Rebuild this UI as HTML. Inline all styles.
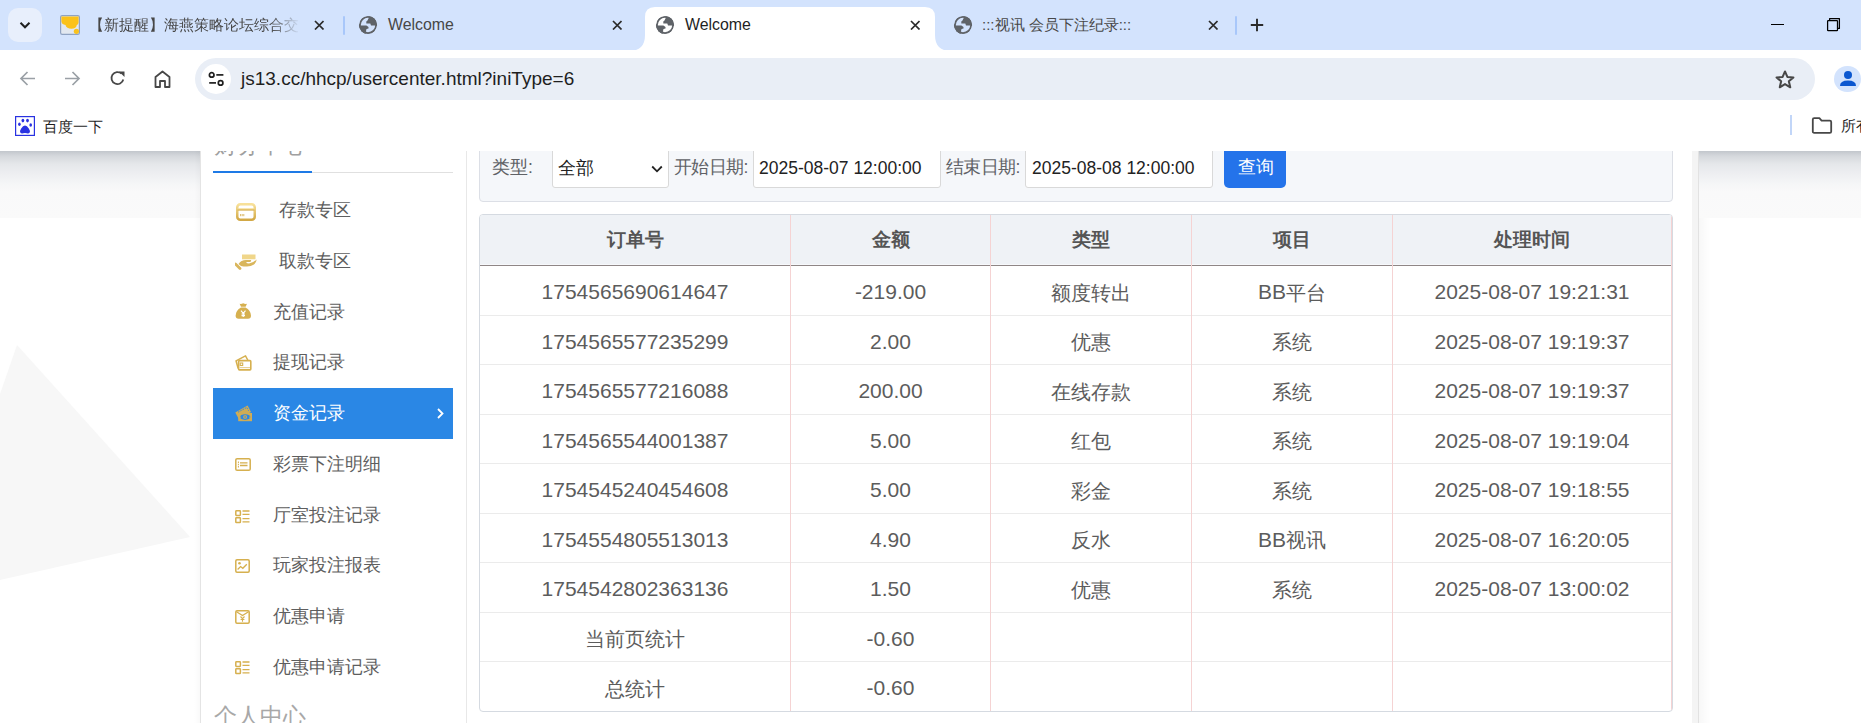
<!DOCTYPE html>
<html><head><meta charset="utf-8">
<style>
*{box-sizing:border-box;margin:0;padding:0}
html,body{width:1861px;height:723px;overflow:hidden;background:#fff;font-family:"Liberation Sans",sans-serif;position:relative}
.a{position:absolute}
.tabstrip{left:0;top:0;width:1861px;height:50px;background:#d3e3fd}
.ttl{font-size:15px;color:#474747;white-space:nowrap;line-height:18px}
.sep{width:2px;height:19px;background:#a8c7fa;border-radius:1px}
.toolbar{left:0;top:50px;width:1861px;height:101px;background:#fff;border-radius:9px 0 0 0}
.omni{left:195px;top:58px;width:1620px;height:42px;border-radius:21px;background:#e9eef6}
.page{left:0;top:151px;width:1861px;height:572px;background:#fff;overflow:hidden}
.side-item{position:absolute;left:213px;width:240px;height:50.75px}
.side-item .t{position:absolute;top:0px;line-height:50px;font-size:17.5px;color:#5e5e5e;white-space:nowrap}
.lbl{font-size:17.5px;color:#606266;line-height:20px;white-space:nowrap}
.inp{background:#fff;border:1px solid #d9d9d9;border-radius:3px}
.inp span{position:absolute;font-size:17.5px;color:#222;line-height:20px;white-space:nowrap}
.th{top:0;height:50px;line-height:50px;text-align:center;font-size:18.5px;font-weight:bold;color:#555}
.cj{font-size:20px;position:relative;top:0.5px}
.td{height:49.5px;line-height:51px;text-align:center;font-size:21px;color:#5c5c5c;white-space:nowrap}
</style></head><body>
<!-- tab strip -->
<div class="a tabstrip"></div>
<div class="a" style="left:8px;top:8px;width:34px;height:34px;border-radius:10px;background:#e8effc"></div>
<svg class="a" style="left:19px;top:19px" width="12" height="12" viewBox="0 0 12 12"><path d="M1.5 3.8 L6 8.3 L10.5 3.8" fill="none" stroke="#1f1f1f" stroke-width="2"/></svg>
<!-- tab1 -->
<svg class="a" style="left:60px;top:15px" width="20" height="20" viewBox="0 0 20 20"><rect x="0.6" y="0.6" width="18.8" height="18.8" rx="1.6" fill="#e2e8f0" stroke="#8fa3c3" stroke-width="1.2"/><path d="M1.4 1.4 H18.6 V7.5 Q18.4 9.5 16.8 10 Q16.5 13.5 11.5 13.8 Q6.5 13.8 5.5 10 Q1.8 9.5 1.4 6.5 Z" fill="#fbc21a"/><circle cx="16.4" cy="16.3" r="2.6" fill="#f9c21d"/></svg>
<div class="a ttl" style="left:89px;top:16px;width:211px;overflow:hidden;-webkit-mask-image:linear-gradient(90deg,#000 86%,transparent)">【新提醒】海燕策略论坛综合交流</div>
<svg class="a" style="left:313.7px;top:19.8px" width="10.5" height="10.5" viewBox="0 0 10.5 10.5"><path d="M1 1 L9.5 9.5 M9.5 1 L1 9.5" stroke="#2b2b2b" stroke-width="1.7"/></svg>
<div class="a sep" style="left:343px;top:16px"></div>
<!-- tab2 -->
<svg class="a" style="left:358px;top:15px" width="20" height="20" viewBox="-10 -10 20 20"><defs><clipPath id="gc368"><circle r="9.1"/></clipPath></defs><g clip-path="url(#gc368)"><circle r="8.15" fill="none" stroke="#5f6368" stroke-width="1.9"/><path d="M0.7,-10 L0.7,-7 L-0.5,-4.6 L-1.7,-3.6 L-1.7,-1.5 L2.3,-1.4 L3,0.4 L10,0.4 L10,-10 Z M-10,0.4 L-1.6,0.4 L0.5,2 L0.5,3.6 L-1.5,3.9 L-2.1,6.5 L-1.7,10 L-10,10 Z" fill="#5f6368"/></g></svg>
<div class="a ttl" style="left:388px;top:16px;font-size:15.9px">Welcome</div>
<svg class="a" style="left:611.7px;top:19.8px" width="10.5" height="10.5" viewBox="0 0 10.5 10.5"><path d="M1 1 L9.5 9.5 M9.5 1 L1 9.5" stroke="#2b2b2b" stroke-width="1.7"/></svg>
<!-- active tab -->
<svg class="a" style="left:629px;top:7px" width="322" height="44" viewBox="0 0 322 44"><path d="M0 44 Q16 44 16 28 V10 Q16 0 26 0 H296 Q306 0 306 10 V28 Q306 44 322 44 Z" fill="#fff"/></svg>
<svg class="a" style="left:655px;top:15px" width="20" height="20" viewBox="-10 -10 20 20"><defs><clipPath id="gc665"><circle r="9.1"/></clipPath></defs><g clip-path="url(#gc665)"><circle r="8.15" fill="none" stroke="#5f6368" stroke-width="1.9"/><path d="M0.7,-10 L0.7,-7 L-0.5,-4.6 L-1.7,-3.6 L-1.7,-1.5 L2.3,-1.4 L3,0.4 L10,0.4 L10,-10 Z M-10,0.4 L-1.6,0.4 L0.5,2 L0.5,3.6 L-1.5,3.9 L-2.1,6.5 L-1.7,10 L-10,10 Z" fill="#5f6368"/></g></svg>
<div class="a ttl" style="left:685px;top:16px;color:#1f1f1f;font-size:15.9px">Welcome</div>
<svg class="a" style="left:909.7px;top:19.8px" width="10.5" height="10.5" viewBox="0 0 10.5 10.5"><path d="M1 1 L9.5 9.5 M9.5 1 L1 9.5" stroke="#2b2b2b" stroke-width="1.7"/></svg>
<!-- tab4 -->
<svg class="a" style="left:953px;top:15px" width="20" height="20" viewBox="-10 -10 20 20"><defs><clipPath id="gc963"><circle r="9.1"/></clipPath></defs><g clip-path="url(#gc963)"><circle r="8.15" fill="none" stroke="#5f6368" stroke-width="1.9"/><path d="M0.7,-10 L0.7,-7 L-0.5,-4.6 L-1.7,-3.6 L-1.7,-1.5 L2.3,-1.4 L3,0.4 L10,0.4 L10,-10 Z M-10,0.4 L-1.6,0.4 L0.5,2 L0.5,3.6 L-1.5,3.9 L-2.1,6.5 L-1.7,10 L-10,10 Z" fill="#5f6368"/></g></svg>
<div class="a ttl" style="left:982px;top:16px">:::视讯 会员下注纪录:::</div>
<svg class="a" style="left:1207.7px;top:19.8px" width="10.5" height="10.5" viewBox="0 0 10.5 10.5"><path d="M1 1 L9.5 9.5 M9.5 1 L1 9.5" stroke="#2b2b2b" stroke-width="1.7"/></svg>
<div class="a sep" style="left:1235px;top:16px"></div>
<svg class="a" style="left:1250px;top:18px" width="14" height="14" viewBox="0 0 14 14"><path d="M7 0.8 V13.2 M0.8 7 H13.2" stroke="#2b2b2b" stroke-width="1.9"/></svg>
<!-- window controls -->
<div class="a" style="left:1771px;top:23.8px;width:13px;height:1.3px;background:#000"></div>
<svg class="a" style="left:1826px;top:17px" width="15" height="15" viewBox="0 0 15 15"><rect x="1.6" y="3.6" width="9.9" height="9.9" rx="0.6" fill="none" stroke="#000" stroke-width="1.25"/><path d="M3.6 3.4 V1.6 H13.4 V11.4 H11.6" fill="none" stroke="#000" stroke-width="1.25" stroke-linejoin="round"/></svg>
<!-- toolbar -->
<div class="a toolbar"></div>
<svg class="a" style="left:19px;top:70px" width="17" height="17" viewBox="0 0 17 17"><path d="M16 8.5 H2.5 M8.5 2 L2 8.5 L8.5 15" fill="none" stroke="#9aa0a6" stroke-width="1.7"/></svg>
<svg class="a" style="left:64px;top:70px" width="17" height="17" viewBox="0 0 17 17"><path d="M1 8.5 H14.5 M8.5 2 L15 8.5 L8.5 15" fill="none" stroke="#9aa0a6" stroke-width="1.7"/></svg>
<svg class="a" style="left:109px;top:70px" width="17" height="17" viewBox="0 0 17 17"><path d="M14.3 9.5 A6 6 0 1 1 12.6 3.7" fill="none" stroke="#474747" stroke-width="1.8"/><path d="M10 1.5 L15.5 1.5 L15.5 7 Z" fill="#474747"/></svg>
<svg class="a" style="left:154px;top:70px" width="17" height="18" viewBox="0 0 17 18"><path d="M1.5 17 V7 L8.5 1.5 L15.5 7 V17 H11 V11 H6 V17 Z" fill="none" stroke="#474747" stroke-width="1.8" stroke-linejoin="round"/></svg>
<div class="a omni"></div>
<div class="a" style="left:201px;top:64px;width:30px;height:30px;border-radius:15px;background:#fff"></div>
<svg class="a" style="left:207px;top:70px" width="18" height="18" viewBox="0 0 18 18"><circle cx="4.7" cy="4.9" r="2.3" fill="none" stroke="#1f1f1f" stroke-width="1.7"/><path d="M9.3 4.9 H16.4" stroke="#1f1f1f" stroke-width="1.7"/><circle cx="13.6" cy="12.9" r="2.3" fill="none" stroke="#1f1f1f" stroke-width="1.7"/><path d="M2.2 12.9 H9" stroke="#1f1f1f" stroke-width="1.7"/></svg>
<div class="a" style="left:241px;top:68px;font-size:19px;color:#1f1f1f;line-height:22px;white-space:nowrap">js13.cc/hhcp/usercenter.html?iniType=6</div>
<svg class="a" style="left:1774px;top:69px" width="22" height="21" viewBox="0 0 24 24"><path d="M12 2.8 L14.7 9.1 L21.6 9.6 L16.4 14.1 L18 20.9 L12 17.3 L6 20.9 L7.6 14.1 L2.4 9.6 L9.3 9.1 Z" fill="none" stroke="#474747" stroke-width="2.3" stroke-linejoin="round"/></svg>
<div class="a" style="left:1834px;top:66px;width:27px;height:26px;border-radius:13px;background:#d3e3fd"></div>
<svg class="a" style="left:1838px;top:69px" width="20" height="20" viewBox="0 0 20 20"><circle cx="10" cy="6" r="4" fill="#0b57d0"/><path d="M2 17 Q2 11.5 10 11.5 Q18 11.5 18 17 Z" fill="#0b57d0"/></svg>
<!-- bookmarks -->
<svg class="a" style="left:15px;top:116px" width="20" height="20" viewBox="0 0 20 20"><rect x="0.6" y="0.6" width="18.8" height="18.8" fill="#fff" stroke="#2932e1" stroke-width="1.2"/><ellipse cx="7.9" cy="4.6" rx="1.4" ry="1.8" fill="#2932e1"/><ellipse cx="12.5" cy="4.6" rx="1.4" ry="1.8" fill="#2932e1"/><ellipse cx="4.4" cy="8.3" rx="1.3" ry="1.7" fill="#2932e1"/><ellipse cx="15.7" cy="9" rx="1.3" ry="1.7" fill="#2932e1"/><path d="M10 9.6 Q8 9.6 6.2 12.4 Q4.4 15 5.3 16.6 Q6.2 17.8 8.2 17.3 Q10 16.9 11.8 17.3 Q13.8 17.8 14.7 16.6 Q15.6 15 13.8 12.4 Q12 9.6 10 9.6 Z" fill="#2932e1"/></svg>
<div class="a" style="left:43px;top:117.5px;font-size:15px;color:#1f1f1f;line-height:18px">百度一下</div>
<div class="a" style="left:1790px;top:115px;width:2px;height:20px;background:#c2d6f8"></div>
<svg class="a" style="left:1811px;top:117px" width="22" height="17" viewBox="0 0 22 17"><path d="M1.8 2.6 Q1.8 1.2 3.2 1.2 H8.4 L10.6 3.6 H18.8 Q20.2 3.6 20.2 5 V14.4 Q20.2 15.8 18.8 15.8 H3.2 Q1.8 15.8 1.8 14.4 Z" fill="none" stroke="#474747" stroke-width="1.8" stroke-linejoin="round"/></svg>
<div class="a" style="left:1841px;top:117px;font-size:15px;color:#1f1f1f;line-height:18px;white-space:nowrap">所有书签</div>
<!-- page -->
<div class="a page">
  <!-- background decorations (coords relative to page top=151) -->
  <div class="a" style="left:0;top:0;width:1861px;height:67px;background:linear-gradient(180deg,#c2c6cc 0px,#d5d8dc 5px,#e5e7ea 13px,#edeef1 22px,#f5f6f7 33px,#f9f9fa 41px,#fafafa 67px)"></div>
  <svg class="a" style="left:0;top:0" width="200" height="572"><polygon points="0,243 17,194 190,386 0,429" fill="#f7f7f7"/></svg>
  <!-- container -->
  <div class="a" style="left:194px;top:0;width:6px;height:572px;background:linear-gradient(90deg,rgba(0,0,0,0),rgba(0,0,0,0.025))"></div>
  <div class="a" style="left:200px;top:0;width:1498px;height:572px;background:#fff;border-left:1px solid #e4e4e4"></div>
  <div class="a" style="left:1692px;top:0;width:7px;height:572px;background:#f4f4f4;border-right:1px solid #e2e2e2"></div>
  <div class="a" style="left:1699px;top:67px;width:12px;height:505px;background:linear-gradient(90deg,rgba(0,0,0,0.03),rgba(0,0,0,0))"></div>
  <div class="a" style="left:466px;top:0;width:1px;height:572px;background:#e8e8e8"></div>
  <!-- sidebar -->
  <div class="a" style="left:214px;top:-18px;font-size:22.5px;color:#a0a0a0;line-height:26px;white-space:nowrap">财务中心</div>
  <div class="a" style="left:213px;top:21px;width:240px;height:1px;background:#e0e0e0"></div>
  <div class="a" style="left:213px;top:20px;width:99px;height:2px;background:#1e7ae6"></div>
  <!-- sidebar items -->
  <svg width="0" height="0" style="position:absolute"><defs><linearGradient id="gd" x1="0" y1="0" x2="0" y2="1"><stop offset="0" stop-color="#f8e19a"/><stop offset="1" stop-color="#d2a845"/></linearGradient></defs></svg>
  <div class="side-item" style="top:34px"><svg class="a" style="left:23px;top:18px" width="20" height="18" viewBox="0 0 20 18"><rect x="1.25" y="1.25" width="17.5" height="15.5" rx="3" fill="none" stroke="url(#gd)" stroke-width="2.5"/><rect x="1.5" y="5.3" width="17" height="2.3" fill="url(#gd)"/><path d="M4.6 11 V13.2 M6.2 11 V13.2 M7.8 11 V13.2" stroke="#d8b25a" stroke-width="0.9"/></svg><span class="t" style="left:66px">存款专区</span></div>
  <div class="side-item" style="top:84.75px"><svg class="a" style="left:22px;top:17.5px" width="23" height="17" viewBox="0 0 23 17"><rect x="7" y="1.5" width="13.5" height="4.8" fill="#f0d68a"/><path d="M3.5 11 Q6 7 11 7 H16 Q16.5 8.5 15 9 H11 Q12 10.5 14 10.5 Q18 10 21.5 6.5 Q22 8.5 19 11.5 Q16 13.5 12 13.5 Q8 13.5 6 13 Z" fill="#d9b65c"/><path d="M0.5 11 L5 15.5" stroke="#d9b65c" stroke-width="2.8" stroke-linecap="round"/></svg><span class="t" style="left:66px">取款专区</span></div>
  <div class="side-item" style="top:135.5px"><svg class="a" style="left:22px;top:16px" width="17" height="17" viewBox="0 0 17 17"><path d="M4.6 0.8 Q6.5 1.2 8.2 0.2 Q10 1.2 12 0.8 L10.6 3.8 H6 Z" fill="#d6b04f"/><path d="M6 4.6 H10.5 Q15.8 7.5 16 12.8 Q16 15.8 13 15.8 H3.6 Q0.6 15.8 0.6 12.8 Q0.8 7.5 6 4.6 Z" fill="#d6b04f"/><path d="M6 7.6 L8.25 10.3 L10.5 7.6 M8.25 10.3 V14 M6.5 11 H10 M6.5 12.6 H10" fill="none" stroke="#fff" stroke-width="1.1"/></svg><span class="t" style="left:60px">充值记录</span></div>
  <div class="side-item" style="top:186.25px"><svg class="a" style="left:22px;top:17.5px" width="17" height="16" viewBox="0 0 17 16"><path d="M3.2 13.5 L1 5.8 L10.5 0.8 L13 5.5" fill="none" stroke="#d6b04f" stroke-width="1.5" stroke-linejoin="round"/><rect x="3.6" y="5.6" width="12.2" height="9.3" rx="0.8" fill="none" stroke="#d6b04f" stroke-width="1.6"/><rect x="5.2" y="8" width="2.5" height="2.5" fill="none" stroke="#d6b04f" stroke-width="1.1"/><path d="M4.5 12.6 H15" stroke="#e7cf93" stroke-width="1.1"/></svg><span class="t" style="left:60px">提现记录</span></div>
  <div class="side-item" style="top:237px;background:#2a87e5"><svg class="a" style="left:22px;top:17px" width="18" height="17" viewBox="0 0 18 17"><path d="M0.3 7.4 L12.6 0.6 L16 7 L3.7 13.8 Z" fill="#cfac55"/><path d="M3 7.2 L11.8 2.4 L13.6 5.8" fill="none" stroke="#2a87e5" stroke-width="0.9" stroke-dasharray="1.6 1"/><rect x="3.2" y="8" width="13.8" height="8.2" fill="#cfac55"/><ellipse cx="10.1" cy="12.1" rx="5.2" ry="2.8" fill="#2a87e5"/><circle cx="10.1" cy="12.1" r="2" fill="#cfac55"/><path d="M10.1 10.8 V13.4" stroke="#2a87e5" stroke-width="0.8"/><circle cx="5.6" cy="12.1" r="0.6" fill="#cfac55"/><circle cx="14.6" cy="12.1" r="0.6" fill="#cfac55"/></svg><span class="t" style="left:60px;color:#fff">资金记录</span><svg class="a" style="left:223px;top:20px" width="9" height="11" viewBox="0 0 9 11"><path d="M2 1 L6.5 5.5 L2 10" fill="none" stroke="#fff" stroke-width="1.8"/></svg></div>
  <div class="side-item" style="top:287.75px"><svg class="a" style="left:22px;top:19.5px" width="16" height="13" viewBox="0 0 16 13"><rect x="0.8" y="0.8" width="14.4" height="11.4" rx="1.3" fill="none" stroke="#d6b04f" stroke-width="1.5"/><path d="M2.9 4.2 H3.9 M2.9 6.5 H3.9 M2.9 8.8 H3.9" stroke="#d6b04f" stroke-width="1.5"/><path d="M5 4.8 H12.5 M5 7.5 H12.5" stroke="#d6b04f" stroke-width="1.3"/></svg><span class="t" style="left:60px">彩票下注明细</span></div>
  <div class="side-item" style="top:338.5px"><svg class="a" style="left:22px;top:20px" width="16" height="14" viewBox="0 0 16 14"><rect x="0.8" y="0.8" width="4.6" height="4.6" rx="0.6" fill="none" stroke="#d6b04f" stroke-width="1.5"/><rect x="0.8" y="7.7" width="4.6" height="4.8" rx="0.6" fill="none" stroke="#d6b04f" stroke-width="1.5"/><path d="M7.5 1 H14.5 M7.5 4.3 H14.5 M7.5 8.6 H14.5 M7.5 11.9 H14.5" stroke="#d6b04f" stroke-width="1.3"/></svg><span class="t" style="left:60px">厅室投注记录</span></div>
  <div class="side-item" style="top:389.25px"><svg class="a" style="left:22px;top:19px" width="15" height="14" viewBox="0 0 15 14"><rect x="0.8" y="0.8" width="13.4" height="12.4" rx="1.2" fill="none" stroke="#d6b04f" stroke-width="1.5"/><circle cx="4.5" cy="4.2" r="1.3" fill="#d6b04f"/><path d="M2.6 10.5 L5.6 7.6 L7.8 9.3 L11.8 5.2" fill="none" stroke="#d6b04f" stroke-width="1.3"/></svg><span class="t" style="left:60px">玩家投注报表</span></div>
  <div class="side-item" style="top:440px"><svg class="a" style="left:22px;top:19px" width="15" height="14" viewBox="0 0 15 14"><rect x="0.8" y="0.8" width="13.4" height="12.4" rx="1.2" fill="none" stroke="#d6b04f" stroke-width="1.5"/><path d="M1.5 1.8 L7.5 5.5 L13.5 1.8" fill="none" stroke="#d6b04f" stroke-width="1.3"/><path d="M5.5 6.5 L7.5 8.6 L9.5 6.5 M7.5 8.6 V11.8 M5.6 9.5 H9.4" fill="none" stroke="#d6b04f" stroke-width="1.1"/></svg><span class="t" style="left:60px">优惠申请</span></div>
  <div class="side-item" style="top:490.75px"><svg class="a" style="left:22px;top:19.5px" width="16" height="14" viewBox="0 0 16 14"><rect x="0.8" y="0.8" width="4.6" height="4.6" rx="0.6" fill="none" stroke="#d6b04f" stroke-width="1.5"/><rect x="0.8" y="7.7" width="4.6" height="4.8" rx="0.6" fill="none" stroke="#d6b04f" stroke-width="1.5"/><path d="M7.5 1 H14.5 M7.5 4.3 H14.5 M7.5 8.6 H14.5 M7.5 11.9 H14.5" stroke="#d6b04f" stroke-width="1.3"/></svg><span class="t" style="left:60px">优惠申请记录</span></div>
  <div class="a" style="left:214px;top:553px;font-size:22.5px;color:#a8a8a8;line-height:26px;white-space:nowrap">个人中心</div>
<!-- /side -->
  <!-- content -->
  <div class="a" style="left:479px;top:-10px;width:1194px;height:61px;background:#f5f7fa;border:1px solid #dcdfe6;border-radius:4px"></div>
  <div class="a lbl" style="left:492px;top:6px">类型:</div>
  <div class="a inp" style="left:552px;top:-4px;width:117px;height:41px"><span style="left:5px;top:10px">全部</span><svg class="a" style="left:98px;top:16px" width="12" height="10" viewBox="0 0 12 10"><path d="M1.2 2.5 L6 7.3 L10.8 2.5" fill="none" stroke="#222" stroke-width="1.8"/></svg></div>
  <div class="a lbl" style="left:674px;top:6px;letter-spacing:-0.6px">开始日期:</div>
  <div class="a inp" style="left:753px;top:-4px;width:188px;height:41px"><span style="left:5px;top:10px">2025-08-07 12:00:00</span></div>
  <div class="a lbl" style="left:946px;top:6px;letter-spacing:-0.6px">结束日期:</div>
  <div class="a inp" style="left:1025px;top:-4px;width:188px;height:41px"><span style="left:6px;top:10px">2025-08-08 12:00:00</span></div>
  <div class="a" style="left:1224px;top:-4px;width:62px;height:41px;background:#2473ea;border-radius:5px;color:#fff;font-size:17.5px;line-height:20px"><span class="a" style="left:14px;top:10px">查询</span></div>
  <div class="a" style="left:479px;top:63px;width:1194px;height:498px;border:1px solid #d5dae1;border-radius:4px;overflow:hidden;background:#fff">
    <div class="a" style="left:0;top:0;width:1194px;height:49px;background:#eff2f6"></div>
    <div class="a" style="left:0;top:49px;width:1194px;height:1px;background:#f7f9fc"></div>
    <div class="a" style="left:0;top:50px;width:1194px;height:1px;background:#8f8686"></div>
    <div class="a th" style="left:0px;width:310px">订单号</div>
    <div class="a th" style="left:311px;width:199px">金额</div>
    <div class="a th" style="left:511px;width:200px">类型</div>
    <div class="a th" style="left:712px;width:200px">项目</div>
    <div class="a th" style="left:913px;width:278px">处理时间</div>
    <div class="a" style="left:0;top:100px;width:1194px;height:1px;background:#ebebeb"></div>
    <div class="a td" style="left:0px;top:51.0px;width:310px">1754565690614647</div>
    <div class="a td" style="left:311px;top:51.0px;width:199px">-219.00</div>
    <div class="a td" style="left:511px;top:51.0px;width:200px"><span class="cj">额度转出</span></div>
    <div class="a td" style="left:712px;top:51.0px;width:200px">BB<span class="cj">平台</span></div>
    <div class="a td" style="left:913px;top:51.0px;width:278px">2025-08-07 19:21:31</div>
    <div class="a" style="left:0;top:149px;width:1194px;height:1px;background:#ebebeb"></div>
    <div class="a td" style="left:0px;top:100.5px;width:310px">1754565577235299</div>
    <div class="a td" style="left:311px;top:100.5px;width:199px">2.00</div>
    <div class="a td" style="left:511px;top:100.5px;width:200px"><span class="cj">优惠</span></div>
    <div class="a td" style="left:712px;top:100.5px;width:200px"><span class="cj">系统</span></div>
    <div class="a td" style="left:913px;top:100.5px;width:278px">2025-08-07 19:19:37</div>
    <div class="a" style="left:0;top:199px;width:1194px;height:1px;background:#ebebeb"></div>
    <div class="a td" style="left:0px;top:150.0px;width:310px">1754565577216088</div>
    <div class="a td" style="left:311px;top:150.0px;width:199px">200.00</div>
    <div class="a td" style="left:511px;top:150.0px;width:200px"><span class="cj">在线存款</span></div>
    <div class="a td" style="left:712px;top:150.0px;width:200px"><span class="cj">系统</span></div>
    <div class="a td" style="left:913px;top:150.0px;width:278px">2025-08-07 19:19:37</div>
    <div class="a" style="left:0;top:248px;width:1194px;height:1px;background:#ebebeb"></div>
    <div class="a td" style="left:0px;top:199.5px;width:310px">1754565544001387</div>
    <div class="a td" style="left:311px;top:199.5px;width:199px">5.00</div>
    <div class="a td" style="left:511px;top:199.5px;width:200px"><span class="cj">红包</span></div>
    <div class="a td" style="left:712px;top:199.5px;width:200px"><span class="cj">系统</span></div>
    <div class="a td" style="left:913px;top:199.5px;width:278px">2025-08-07 19:19:04</div>
    <div class="a" style="left:0;top:298px;width:1194px;height:1px;background:#ebebeb"></div>
    <div class="a td" style="left:0px;top:249.0px;width:310px">1754545240454608</div>
    <div class="a td" style="left:311px;top:249.0px;width:199px">5.00</div>
    <div class="a td" style="left:511px;top:249.0px;width:200px"><span class="cj">彩金</span></div>
    <div class="a td" style="left:712px;top:249.0px;width:200px"><span class="cj">系统</span></div>
    <div class="a td" style="left:913px;top:249.0px;width:278px">2025-08-07 19:18:55</div>
    <div class="a" style="left:0;top:347px;width:1194px;height:1px;background:#ebebeb"></div>
    <div class="a td" style="left:0px;top:298.5px;width:310px">1754554805513013</div>
    <div class="a td" style="left:311px;top:298.5px;width:199px">4.90</div>
    <div class="a td" style="left:511px;top:298.5px;width:200px"><span class="cj">反水</span></div>
    <div class="a td" style="left:712px;top:298.5px;width:200px">BB<span class="cj">视讯</span></div>
    <div class="a td" style="left:913px;top:298.5px;width:278px">2025-08-07 16:20:05</div>
    <div class="a" style="left:0;top:397px;width:1194px;height:1px;background:#ebebeb"></div>
    <div class="a td" style="left:0px;top:348.0px;width:310px">1754542802363136</div>
    <div class="a td" style="left:311px;top:348.0px;width:199px">1.50</div>
    <div class="a td" style="left:511px;top:348.0px;width:200px"><span class="cj">优惠</span></div>
    <div class="a td" style="left:712px;top:348.0px;width:200px"><span class="cj">系统</span></div>
    <div class="a td" style="left:913px;top:348.0px;width:278px">2025-08-07 13:00:02</div>
    <div class="a" style="left:0;top:446px;width:1194px;height:1px;background:#ebebeb"></div>
    <div class="a td" style="left:0px;top:397.5px;width:310px"><span class="cj">当前页统计</span></div>
    <div class="a td" style="left:311px;top:397.5px;width:199px">-0.60</div>
    <div class="a td" style="left:0px;top:447.0px;width:310px"><span class="cj">总统计</span></div>
    <div class="a td" style="left:311px;top:447.0px;width:199px">-0.60</div>
    <div class="a" style="left:310px;top:0;width:1px;height:498px;background:#f5d3d3"></div>
    <div class="a" style="left:510px;top:0;width:1px;height:498px;background:#f5d3d3"></div>
    <div class="a" style="left:711px;top:0;width:1px;height:498px;background:#f5d3d3"></div>
    <div class="a" style="left:912px;top:0;width:1px;height:498px;background:#f5d3d3"></div>
    <div class="a" style="left:1191px;top:0;width:1px;height:498px;background:#f5d3d3"></div>
  </div>
  <!-- /content -->
</div>
</body></html>
